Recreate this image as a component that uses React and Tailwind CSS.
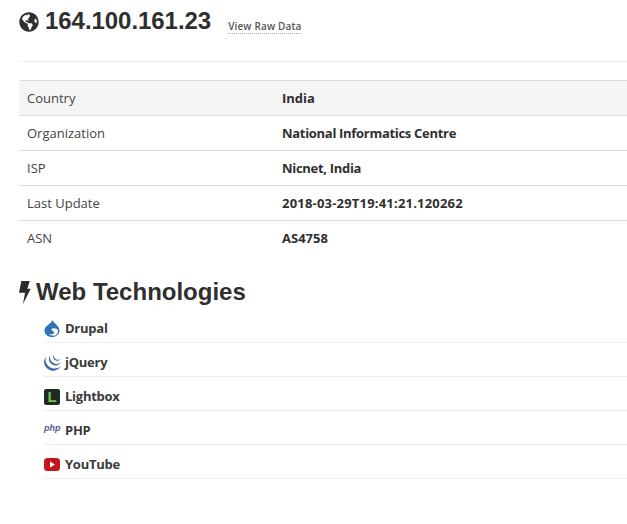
import React from "react";
import { FaGlobeAmericas } from "react-icons/fa";
import { SiJquery } from "react-icons/si";

const rows = [
  ["Country", "India", ""],
  ["Organization", "National Informatics Centre", "tracking-[-0.3px]"],
  ["ISP", "Nicnet, India", "tracking-[-0.3px]"],
  ["Last Update", "2018-03-29T19:41:21.120262", "tracking-[0.2px]"],
  ["ASN", "AS4758", ""],
];

const Drupal = () => (
  <svg viewBox="0 0 16 17" className="w-4 h-[17px]">
    <path d="M8.5 0C9 3 15.500 5.500 15.500 10.500C15.500 14.500 12 17 8 17C4 17 .5 14.500 .5 10.500C.5 5.500 7 4 8.500 0Z" fill="#2f74b5" />
    <path d="M7 9.500C9 7.500 13 8 14 10.500C14.500 12.500 13 15 11 15.500C9 16 6 15.500 5 14C6.500 14.500 9 14.500 10 13.500C10.500 12 9 11 7 9.500Z" fill="#fff" />
  </svg>
);

const Bolt = () => (
  <svg viewBox="0 0 12 24" className="w-3 h-6 shrink-0">
    <polygon points="2.300,1 10.700,1 8.300,8.700 11.700,8.700 4,24 6,12.700 0,12.700" fill="#2b2b2b" />
  </svg>
);

const YouTube = () => (
  <svg viewBox="0 0 16 13" className="w-4 h-[13px]">
    <rect x="0" y="0" width="16" height="13" rx="3.500" fill="#c4161c" />
    <polygon points="6,3.500 11,6.500 6,9.500" fill="#fff" />
  </svg>
);

const techs = [
  ["Drupal", <Drupal />],
  ["jQuery", <SiJquery className="w-[17px] h-[17px] text-[#3d66a8]" />],
  [
    "Lightbox",
    <span className="w-4 h-4 rounded-[2px] bg-[#1f2a25] flex items-center justify-center">
      <span className="text-[#7cc04b] text-[15px] font-bold leading-none font-['Liberation_Sans',sans-serif]">L</span>
    </span>,
  ],
  ["PHP", <span className="text-[9px] italic font-bold leading-none text-[#4f5b93] font-['Liberation_Sans',sans-serif] -mt-1">php</span>],
  ["YouTube", <YouTube />],
];

export default function App() {
  return (
    <div className="w-[627px] h-[524px] overflow-hidden bg-white pl-[19px] text-[#333] font-['Open_Sans',sans-serif] text-[13px]">
      <div className="h-[62px] border-b border-[#eee] flex items-start pt-[8px]">
        <FaGlobeAmericas className="w-5 h-5 mt-[4px] text-[#2f2f2f]" />
        <h1 className="ml-[6px] text-[24px] leading-[25px] font-bold font-['Liberation_Sans',sans-serif] tracking-[-0.05px] text-[#2f2f2f]">164.100.161.23</h1>
        <a className="ml-[17px] mt-[11px] text-[10px] leading-[14px] font-semibold tracking-[0.15px] text-[#555] border-b border-dotted border-[#aaa]">View Raw Data</a>
      </div>
      <div className="mt-[18px] border-t border-[#ddd]">
        {rows.map(([k, v, track], i) => (
          <div key={k} className={`flex items-center h-[35px] px-2 ${i < 4 ? "border-b border-[#ddd] pt-[2px]" : ""} ${i === 0 ? "bg-[#f5f5f5]" : ""}`}>
            <span className="w-[255px] text-[#444]">{k}</span>
            <span className={`font-bold text-[#2f2f2f] ${track}`}>{v}</span>
          </div>
        ))}
      </div>
      <div className="flex items-center mt-[22px] h-[28px]">
        <Bolt />
        <h2 className="ml-[5px] text-[24px] leading-[28px] font-bold font-['Liberation_Sans',sans-serif] text-[#2f2f2f]">Web Technologies</h2>
      </div>
      <div className="ml-[25px] mt-[3px]">
        {techs.map(([name, icon]) => (
          <div key={name} className="flex items-center h-[34px] pt-[6px] border-b border-[#eee]">
            <span className="w-[21px] flex justify-start">{icon}</span>
            <span className="font-bold tracking-[-0.25px] text-[#3a3a3a]">{name}</span>
          </div>
        ))}
      </div>
    </div>
  );
}
